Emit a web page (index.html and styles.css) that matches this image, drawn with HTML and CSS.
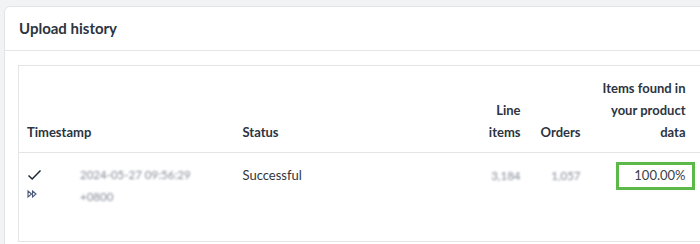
FILE: index.html
```html
<!DOCTYPE html>
<html>
<head>
<meta charset="utf-8">
<link rel="stylesheet" href="styles.css">
</head>
<body>
<div class="card">
  <div class="card-head">Upload history</div>
  <div class="card-body">
    <table class="history">
      <colgroup>
        <col class="c-ts"><col class="c-status"><col class="c-line"><col class="c-orders"><col class="c-found"><col class="c-fill">
      </colgroup>
      <thead>
        <tr>
          <th>Timestamp</th>
          <th>Status</th>
          <th class="num">Line items</th>
          <th class="num">Orders</th>
          <th class="num">Items found in your product data</th>
          <th></th>
        </tr>
      </thead>
      <tbody>
        <tr>
          <td>
            <div class="ts">
              <div class="icons">
                <svg width="15" height="12" viewBox="0 0 15 12"><path d="M1.5 6.5 L5.2 10 L13.5 1.5" fill="none" stroke="#1d2733" stroke-width="1.5"/></svg>
                <svg width="10" height="8" viewBox="0 0 10 8"><path d="M1 1 L4.5 4 L1 7 Z M5.5 1 L9 4 L5.5 7 Z" fill="none" stroke="#4a5a78" stroke-width="1.1"/></svg>
              </div>
              <div class="blur">2024-05-27 09:56:29<br>+0800</div>
            </div>
          </td>
          <td>Successful</td>
          <td class="num"><span class="blur">3,184</span></td>
          <td class="num"><span class="blur">1,057</span></td>
          <td class="num found">100.00%<span class="highlight"></span></td>
          <td></td>
        </tr>
      </tbody>
    </table>
  </div>
</div>
</body>
</html>
```
FILE: styles.css
```css
html, body {
  margin: 0;
  padding: 0;
  background: #f2f3f4;
  overflow: hidden;
  width: 700px;
  height: 244px;
}
body {
  font-family: Lato, "Liberation Sans", sans-serif;
  color: #32363a;
}
.card {
  margin: 6px 0 0 4px;
  width: 730px;
  height: 260px;
  background: #fff;
  border: 1px solid #e2e4e6;
  border-radius: 6px;
}
.card-head {
  height: 44px;
  box-sizing: border-box;
  padding: 12px 14px 0 14px;
  font-size: 15px;
  font-weight: 700;
  line-height: 18px;
  color: #2c3440;
  border-bottom: 1px solid #e3e5e7;
}
.card-body {
  padding: 14px 0 0 13px;
}
.history {
  border-collapse: collapse;
  table-layout: fixed;
  width: 720px;
  border: 1px solid #e3e5e7;
  font-size: 13px;
  line-height: 22px;
}
.c-ts { width: 216px; }
.c-status { width: 236px; }
.c-line { width: 58px; }
.c-orders { width: 60px; }
.c-found { width: 105px; }
.c-fill { width: 45px; }
.history th {
  text-align: left;
  font-weight: 700;
  color: #2c3440;
  vertical-align: bottom;
  padding: 11px 8px 9px 8px;
  height: 66px;
  border-bottom: 1px solid #e3e5e7;
}
.history td {
  vertical-align: top;
  padding: 11px 8px 0 8px;
  height: 77px;
  border-bottom: 1px solid #e3e5e7;
}
.history .num { text-align: right; }
.ts {
  display: flex;
  gap: 38px;
}
.icons {
  display: flex;
  flex-direction: column;
  gap: 9px;
  padding-top: 5px;
}
.blur {
  color: #858b99;
  filter: blur(0.9px);
  font-size: 11.5px;
}
.found { position: relative; font-weight: 400; color: #3b4048; }
.highlight {
  position: absolute;
  right: -1px;
  top: 9px;
  width: 73px;
  height: 22px;
  border: 3px solid #5cb948;
}
```
